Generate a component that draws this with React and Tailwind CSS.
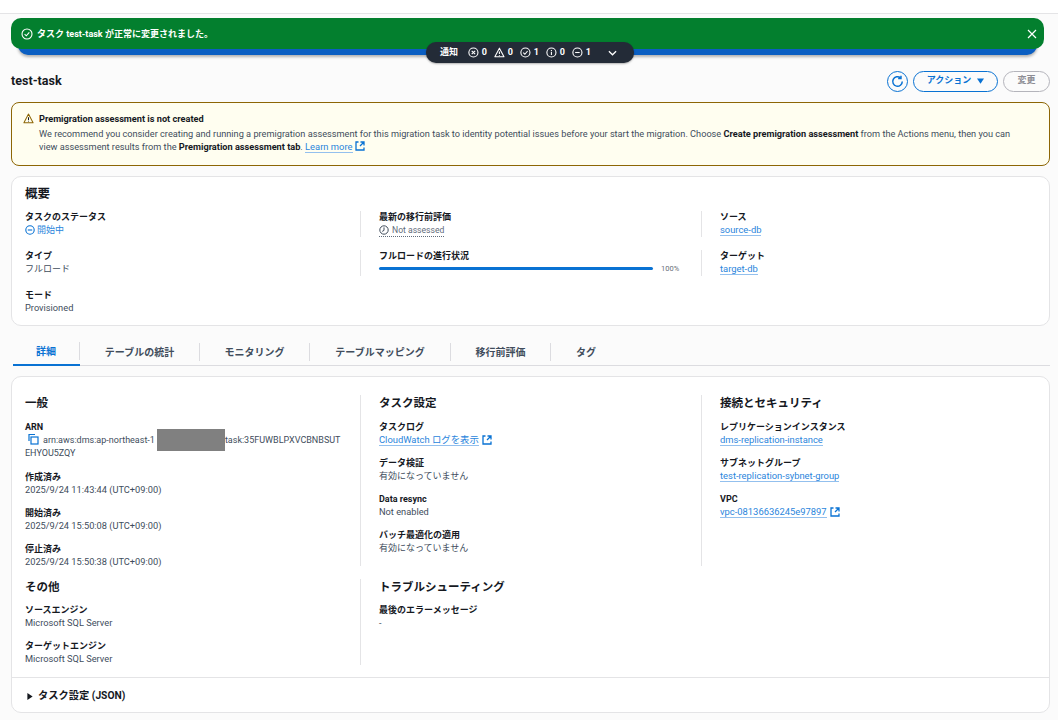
const SANS = "font-['Roboto','Noto_Sans_CJK_JP',sans-serif]";

function ExtIcon({ className = "" }) {
  return (
    <svg viewBox="0 0 10 10" className={"w-[10px] h-[10px] inline-block shrink-0 " + className} fill="none" stroke="#0972d3" strokeWidth="1.3">
      <path d="M3.5 1H1v8h8V6.5" />
      <path d="M5.5 1H9v3.5M9 1 5 5" />
    </svg>
  );
}

function Label({ children }) {
  return <div className="text-[9px] leading-[13px] font-bold text-[#16191f]">{children}</div>;
}

function Value({ children }) {
  return <div className="text-[9px] leading-[13px] text-[#414d5c]">{children}</div>;
}

function EnValue({ children }) {
  return <div className="text-[9.25px] leading-[11px] mb-[2px] text-[#414d5c]">{children}</div>;
}

function LinkText({ children }) {
  return <span className="text-[9.4px] leading-[11px] mb-[1px] text-[#2a85dc] border-b border-[#93c0ee] inline-block">{children}</span>;
}

function Field({ label, children }) {
  return (
    <div className="flex flex-col items-start">
      <Label>{label}</Label>
      {children}
    </div>
  );
}

function H({ children }) {
  return <h3 className="text-[11.5px] leading-[12px] pt-[2px] font-bold text-[#16191f]">{children}</h3>;
}

function StatIcon({ kind }) {
  return (
    <svg viewBox="0 0 10 10" className="w-[11px] h-[11px]" fill="none" stroke="white" strokeWidth="1">
      {kind === "warn" ? (
        <>
          <path d="M5 1 .8 9h8.4Z" strokeLinejoin="round" />
          <path d="M5 4v2.5M5 7.3v.7" />
        </>
      ) : (
        <>
          <circle cx="5" cy="5" r="4.2" />
          {kind === "x" && <path d="m3.4 3.4 3.2 3.2m0-3.2L3.4 6.6" />}
          {kind === "ok" && <path d="m3 5.2 1.5 1.4L7 3.6" />}
          {kind === "info" && <path d="M5 4.4v2.8M5 2.7v.8" />}
          {kind === "minus" && <path d="M2.9 5h4.2" />}
        </>
      )}
    </svg>
  );
}

function Stat({ kind, n }) {
  return (
    <span className="flex items-center gap-[3px] w-[19px]">
      <StatIcon kind={kind} />
      <span>{n}</span>
    </span>
  );
}

const tabs = ["詳細", "テーブルの統計", "モニタリング", "テーブルマッピング", "移行前評価", "タグ"];
const tabWidths = ["w-[67px]", "w-[120px]", "w-[110px]", "w-[141px]", "w-[100px]", "w-[70px]"];

export default function App() {
  return (
    <div className={"relative w-[1058px] h-[720px] overflow-hidden bg-[#fbfbfb] flex flex-col " + SANS}>
      <div className="h-[14px] shrink-0 bg-white border-b border-[#e4e4e6]" />

      <div className="relative shrink-0 mt-[4px] mx-[11px] w-[1033px] h-[37px]">
        <div className="absolute left-[7px] right-[7px] top-[6px] h-[31px] bg-[#0a5ec2] rounded-b-[10px] shadow-[0_2px_3px_rgba(0,0,0,0.3)]" />
        <div className="relative h-[31px] bg-[#037f2e] rounded-[10px] flex items-center pl-[10px] pr-[7px] text-white">
          <svg viewBox="0 0 12 12" className="w-[12px] h-[12px] mr-[4px]" fill="none" stroke="white" strokeWidth="1.1">
            <circle cx="6" cy="6" r="5" />
            <path d="m3.6 6.2 1.7 1.6 3-3.4" />
          </svg>
          <span className="text-[9px] font-bold leading-[13px] pt-[2px]">タスク test-task が正常に変更されました。</span>
          <svg viewBox="0 0 10 10" className="w-[10px] h-[10px] ml-auto" stroke="white" strokeWidth="1.2">
            <path d="m1 1 8 8m0-8L1 9" />
          </svg>
        </div>
      </div>

      <div className="absolute left-[426px] top-[42px] w-[208px] h-[21px] bg-[#232b37] rounded-[10px] flex items-center pl-[14px] text-white text-[9px] font-bold gap-[7px] shadow-[0_1px_2px_rgba(0,0,0,0.3)]">
        <span className="mr-[3px] pt-[1px]">通知</span>
        <Stat kind="x" n="0" />
        <Stat kind="warn" n="0" />
        <Stat kind="ok" n="1" />
        <Stat kind="info" n="0" />
        <Stat kind="minus" n="1" />
        <svg viewBox="0 0 10 6" className="w-[9px] h-[6px] ml-[10px]" fill="none" stroke="white" strokeWidth="1.4">
          <path d="m1 1 4 4 4-4" />
        </svg>
      </div>

      <div className="shrink-0 flex items-center justify-between mx-[11px] mt-[15px] w-[1039px] h-[22px]">
        <h1 className="text-[12.5px] font-bold text-[#16191f]">test-task</h1>
        <div className="flex items-center gap-[5px]">
          <div className="w-[21px] h-[21px] rounded-full border-[1.5px] border-[#0972d3] flex items-center justify-center">
            <svg viewBox="0 0 12 12" className="w-[13px] h-[13px]" fill="none" stroke="#0972d3" strokeWidth="1.4">
              <path d="M10.4 6A4.4 4.4 0 1 1 8.8 2.6" />
              <path d="M9.2.6v2.6H6.6" />
            </svg>
          </div>
          <div className="w-[85px] h-[21px] rounded-full border-[1.5px] border-[#0972d3] flex items-center justify-center gap-[6px] text-[9px] font-bold text-[#0972d3]">
            アクション
            <svg viewBox="0 0 8 6" className="w-[7px] h-[6px]" fill="#0972d3"><path d="M0 0h8L4 6Z" /></svg>
          </div>
          <div className="w-[47px] h-[21px] rounded-full border-[1.5px] border-[#b4b4bb] flex items-center justify-center text-[9px] font-bold text-[#8d8d94]">変更</div>
        </div>
      </div>

      <div className="shrink-0 mx-[11px] mt-[9.5px] w-[1039px] h-[64px] rounded-[8px] border-[1.5px] border-[#8d6605] bg-[#fffef0] pl-[11px] pt-[9px] flex gap-[5px]">
        <svg viewBox="0 0 12 12" className="w-[11px] h-[11px] mt-[1px] shrink-0" fill="none" stroke="#8d6605" strokeWidth="1.1">
          <path d="M6 1.2 1 10.6h10Z" strokeLinejoin="round" />
          <path d="M6 4.6v3M6 8.4v1" stroke="#16191f" />
        </svg>
        <div>
          <div className="text-[9.2px] leading-[13px] font-bold text-[#16191f]">Premigration assessment is not created</div>
          <div className="mt-[2px] text-[9.2px] leading-[13px] text-[#414d5c] whitespace-nowrap">
            We recommend you consider creating and running a premigration assessment for this migration task to identity potential issues before your start the migration. Choose <b className="text-[#16191f]">Create premigration assessment</b> from the Actions menu, then you can
            <br />
            view assessment results from the <b className="text-[#16191f]">Premigration assessment tab</b>. <LinkText>Learn more</LinkText> <ExtIcon className="align-[-1px]" />
          </div>
        </div>
      </div>

      <section className="shrink-0 mx-[11px] mt-[10.5px] w-[1039px] h-[150px] rounded-[10px] border-[1.5px] border-[#e4e4e6] bg-white pl-[13px] pt-[9px]">
        <h2 className="text-[12.5px] leading-[16px] font-bold text-[#16191f]">概要</h2>
        <div className="grid grid-cols-[335px_341px_1fr] mt-[8.5px]">
          <div className="flex flex-col gap-[13px]">
            <Field label="タスクのステータス">
              <div className="text-[9px] leading-[13px] text-[#2a85dc] flex items-center gap-[2px]">
                <svg viewBox="0 0 10 10" className="w-[10px] h-[10px]" fill="none" stroke="#0972d3" strokeWidth="1.1">
                  <circle cx="5" cy="5" r="4.2" />
                  <path d="M2.8 5h4.4" />
                </svg>
                開始中
              </div>
            </Field>
            <Field label="タイプ"><Value>フルロード</Value></Field>
            <Field label="モード"><EnValue>Provisioned</EnValue></Field>
          </div>
          <div className="flex flex-col gap-[13px]">
            <div className="border-l-[1.5px] border-[#e4e4e6] pl-[18px] h-[26px] flex flex-col items-start">
              <Label>最新の移行前評価</Label>
              <div className="text-[8.6px] leading-[12px] text-[#5f6b7a] flex items-center gap-[3px] border-b border-dotted border-[#5f6b7a]">
                <svg viewBox="0 0 10 10" className="w-[10px] h-[10px]" fill="none" stroke="#414d5c" strokeWidth="1">
                  <circle cx="5" cy="5" r="4.2" />
                  <path d="M5 2.4V5.4L3.2 6.4" />
                </svg>
                Not assessed
              </div>
            </div>
            <div className="border-l-[1.5px] border-[#e4e4e6] pl-[18px] h-[26px]">
              <Label>フルロードの進行状況</Label>
              <div className="flex items-center h-[12px]">
                <div className="w-[274px] h-[3px] rounded-full bg-[#0972d3]" />
                <span className="ml-[8px] text-[7.5px] text-[#687078]">100%</span>
              </div>
            </div>
          </div>
          <div className="flex flex-col gap-[13px]">
            <div className="border-l-[1.5px] border-[#e4e4e6] pl-[18px] h-[26px] flex flex-col items-start">
              <Label>ソース</Label>
              <LinkText>source-db</LinkText>
            </div>
            <div className="border-l-[1.5px] border-[#e4e4e6] pl-[18px] h-[26px] flex flex-col items-start">
              <Label>ターゲット</Label>
              <LinkText>target-db</LinkText>
            </div>
          </div>
        </div>
      </section>

      <nav className="shrink-0 mx-[13px] mt-[13px] w-[1037px] h-[27px] border-b border-[#dcdce0] flex items-center">
        {tabs.map((t, i) => (
          <div
            key={t}
            className={
              tabWidths[i] +
              " h-[27px] flex items-center justify-center text-[10px] font-bold " +
              (i === 0 ? "text-[#0972d3] border-b-[2px] border-[#0972d3]" : "text-[#414d5c]")
            }
          >
            <span className="w-full text-center">{t}</span>
            {i < 5 && <span className="w-px h-[18px] bg-[#dcdce0] shrink-0" />}
          </div>
        ))}
      </nav>

      <section className="shrink-0 mx-[11px] mt-[10px] w-[1039px] h-[337px] rounded-[10px] border-[1.5px] border-[#e4e4e6] bg-white flex flex-col">
        <div className="grid grid-cols-[335px_341px_1fr] grid-rows-[171px_86px] gap-y-[13px] pl-[13px] pt-[17.5px]">
          <div>
            <H>一般</H>
            <div className="mt-[12px] flex flex-col gap-[10px]">
              <Field label="ARN">
                <div className="text-[9px] leading-[13px] -mt-[1px] mb-[1px] text-[#414d5c] whitespace-nowrap">
                  <svg viewBox="0 0 12 12" className="w-[12px] h-[12px] inline-block mx-[2px] align-[-2px]" fill="none" stroke="#0972d3" strokeWidth="1.2">
                    <path d="M2 8V1.5h6" />
                    <rect x="4" y="4" width="7" height="7" />
                  </svg>
                  <span className="ml-[2px] mr-[2px]">arn:aws:dms:ap-northeast-1</span>
                  <span className="inline-block relative w-[68px] h-[13px] align-top">
                    <span className="absolute left-0 top-[-3.5px] w-full h-[22px] bg-[#808080]" />
                  </span>
                  <span>task:35FUWBLPXVCBNBSUT</span>
                  <br />
                  EHYOU5ZQY
                </div>
              </Field>
              <Field label="作成済み"><EnValue>2025/9/24 11:43:44 (UTC+09:00)</EnValue></Field>
              <Field label="開始済み"><EnValue>2025/9/24 15:50:08 (UTC+09:00)</EnValue></Field>
              <Field label="停止済み"><EnValue>2025/9/24 15:50:38 (UTC+09:00)</EnValue></Field>
            </div>
          </div>
          <div className="border-l-[1.5px] border-[#e4e4e6] pl-[18px]">
            <H>タスク設定</H>
            <div className="mt-[12px] flex flex-col gap-[10px]">
              <Field label="タスクログ">
                <div className="flex items-center gap-[3px]"><LinkText>CloudWatch ログを表示</LinkText><ExtIcon /></div>
              </Field>
              <Field label="データ検証"><Value>有効になっていません</Value></Field>
              <Field label="Data resync"><EnValue>Not enabled</EnValue></Field>
              <Field label="バッチ最適化の適用"><Value>有効になっていません</Value></Field>
            </div>
          </div>
          <div className="border-l-[1.5px] border-[#e4e4e6] pl-[18px]">
            <H>接続とセキュリティ</H>
            <div className="mt-[12px] flex flex-col gap-[10px]">
              <Field label="レプリケーションインスタンス"><LinkText>dms-replication-instance</LinkText></Field>
              <Field label="サブネットグループ"><LinkText>test-replication-sybnet-group</LinkText></Field>
              <Field label="VPC">
                <div className="flex items-center gap-[3px]"><LinkText>vpc-08136636245e97897</LinkText><ExtIcon /></div>
              </Field>
            </div>
          </div>
          <div>
            <H>その他</H>
            <div className="mt-[11.5px] flex flex-col gap-[10px]">
              <Field label="ソースエンジン"><EnValue>Microsoft SQL Server</EnValue></Field>
              <Field label="ターゲットエンジン"><EnValue>Microsoft SQL Server</EnValue></Field>
            </div>
          </div>
          <div className="border-l-[1.5px] border-[#e4e4e6] pl-[18px]">
            <H>トラブルシューティング</H>
            <div className="mt-[11.5px]">
              <Field label="最後のエラーメッセージ"><Value>-</Value></Field>
            </div>
          </div>
        </div>
        <div className="mt-auto h-[35px] border-t-[1.5px] border-[#e4e4e6] flex items-center pl-[15px] pt-[2px] gap-[5px] text-[10.25px] font-bold text-[#16191f]">
          <svg viewBox="0 0 6 8" className="w-[6px] h-[7px]" fill="#16191f"><path d="M0 0v8l6-4Z" /></svg>
          タスク設定 (JSON)
        </div>
      </section>
    </div>
  );
}
